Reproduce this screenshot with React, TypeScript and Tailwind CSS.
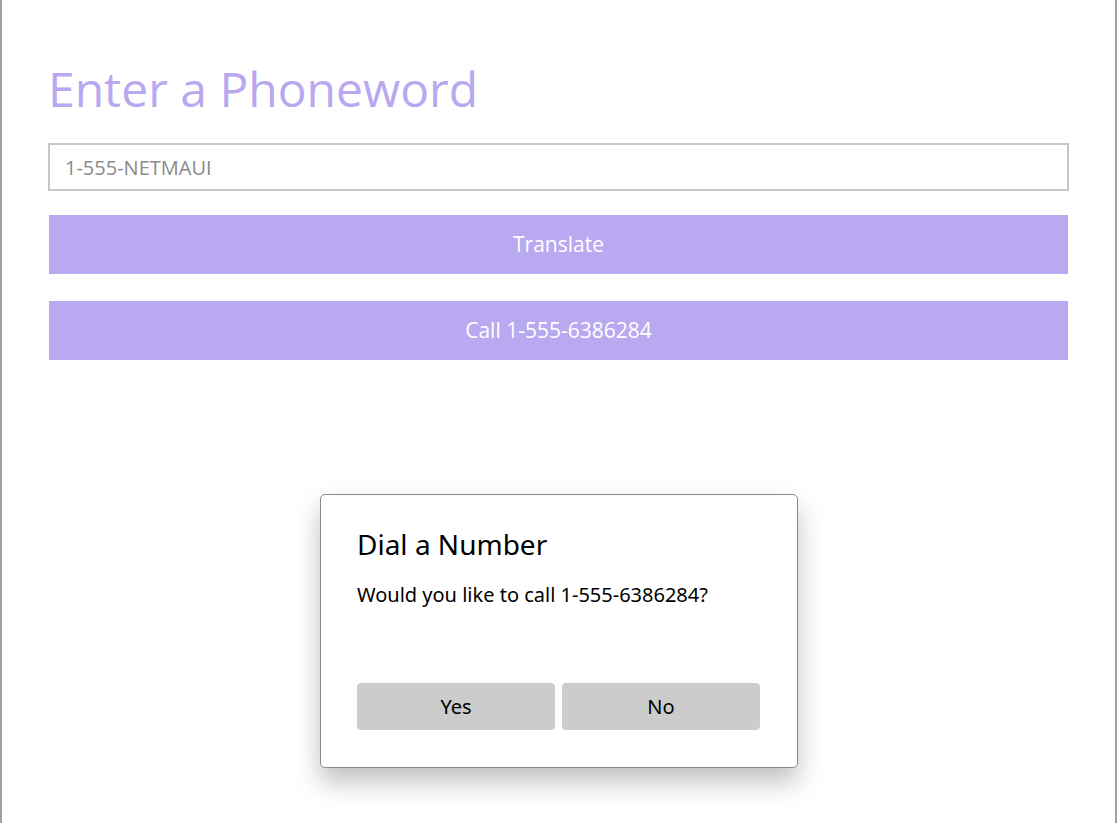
import { useState } from "react";

const translate = (raw: string) => {
  const map: Record<string, string> = {
    ABC: "2", DEF: "3", GHI: "4", JKL: "5", MNO: "6", PQRS: "7", TUV: "8", WXYZ: "9",
  };
  return raw
    .toUpperCase()
    .split("")
    .map((c) => {
      const key = Object.keys(map).find((k) => k.includes(c));
      return key ? map[key] : c;
    })
    .join("");
};

export default function App() {
  const [word, setWord] = useState("");
  const number = translate(word || "1-555-NETMAUI");

  return (
    <div className="relative w-[1117px] h-[823px] bg-white overflow-hidden border-x-2 border-[#a0a0a0] font-['Open_Sans',sans-serif]">
      <div className="pl-[46px] pr-[46px] pt-[58px]">
        <h1 className="text-[48px] leading-[62px] text-[#b9a8f0]">Enter a Phoneword</h1>
        <input
          value={word}
          onChange={(e) => setWord(e.target.value)}
          placeholder="1-555-NETMAUI"
          className="mt-[23px] w-full h-[48px] border-2 border-[#c6c6c6] px-[15px] text-[20px] text-[#333] placeholder:text-[#8a8a8a] outline-none"
        />
        <div className="px-px">
          <button className="mt-[24px] w-full h-[59px] bg-[#b9a9f0] text-white text-[21px]">Translate</button>
          <button className="mt-[27px] w-full h-[59px] bg-[#b9a9f0] text-white text-[21px]">Call {number}</button>
        </div>
      </div>

      {/* alert dialog */}
      <div className="absolute left-[318px] top-[494px] w-[478px] h-[274px] bg-white border border-[#8a8a8a] rounded-[5px] shadow-[0_14px_26px_rgba(0,0,0,0.25)] pl-[36px] pt-[30px] font-['Noto_Sans',sans-serif] text-black">
        <div className="text-[28px] leading-[38px]">Dial a Number</div>
        <div className="mt-[18px] text-[20px] leading-[28px]">Would you like to call {number}?</div>
        <div className="mt-[74px] flex gap-[7px]">
          <button className="w-[198px] h-[47px] bg-[#cccccc] rounded-[4px] text-[20px]">Yes</button>
          <button className="w-[198px] h-[47px] bg-[#cccccc] rounded-[4px] text-[20px]">No</button>
        </div>
      </div>
    </div>
  );
}
